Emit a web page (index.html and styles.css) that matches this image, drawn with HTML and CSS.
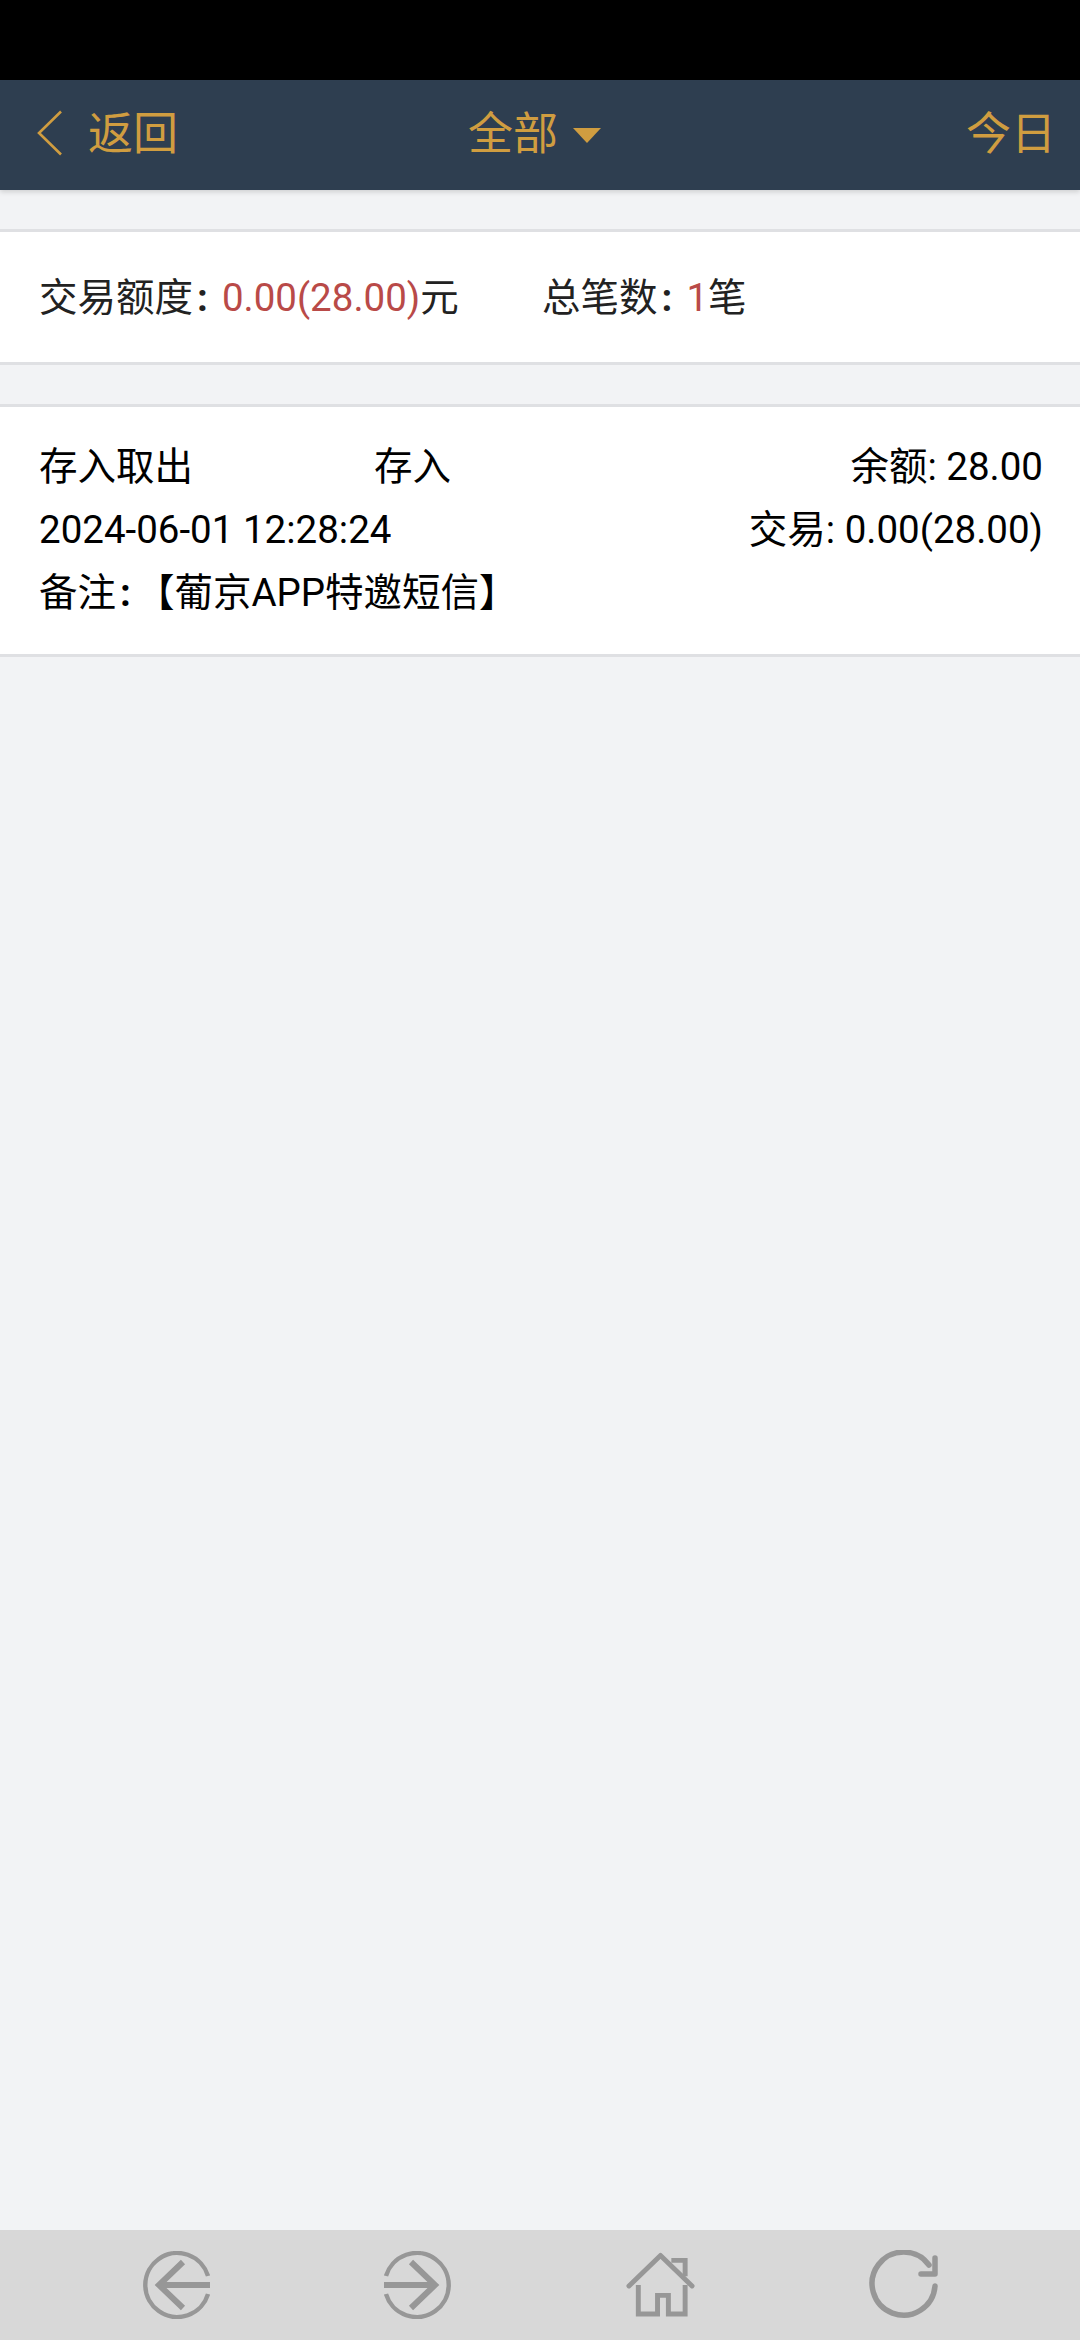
FILE: index.html
```html
<!DOCTYPE html>
<html lang="zh-CN">
<head>
    <meta charset="UTF-8">
    <title>交易记录</title>
    <link rel="stylesheet" href="styles.css">
</head>
<body>
    <div class="status-bar"></div>
    <header class="nav-bar">
        <div class="nav-back">
            <svg class="back-icon" width="28" height="46" viewBox="0 0 28 46">
                <path d="M25 1.5 L3 23 L25 44.5" fill="none" stroke="#d09d40" stroke-width="2.6"/>
            </svg>
            <span>返回</span>
        </div>
        <div class="nav-title">
            <span>全部</span>
            <svg class="caret" width="30" height="16" viewBox="0 0 30 16">
                <path d="M1 1 H29 L15 16 Z" fill="#d09d40"/>
            </svg>
        </div>
        <div class="nav-right">今日</div>
    </header>

    <main class="content">
        <section class="card summary">
            <div class="summary-amount">交易额度<span class="colon">:</span><span class="red">0.00(28.00)</span>元</div>
            <div>总笔数<span class="colon">:</span><span class="red">1</span>笔</div>
        </section>

        <section class="card record">
            <div class="record-row">
                <div class="record-left">
                    <span class="record-type">存入取出</span>
                    <span>存入</span>
                </div>
                <span>余额: 28.00</span>
            </div>
            <div class="record-row">
                <span>2024-06-01 12:28:24</span>
                <span>交易: 0.00(28.00)</span>
            </div>
            <div class="record-row">
                <span>备注<span class="colon colon-tight">:</span>【葡京APP特邀短信】</span>
            </div>
        </section>
    </main>

    <footer class="tool-bar">
        <svg width="68" height="68" viewBox="0 0 68 68" fill="none" stroke="#979797">
            <path d="M66 25 A32 32 0 1 0 66 43" stroke-width="4.4"/>
            <path d="M41 11 L17 34 L41 57" stroke-width="6"/>
            <path d="M17 34 H68" stroke-width="6"/>
        </svg>
        <svg width="68" height="68" viewBox="0 0 68 68" fill="none" stroke="#979797">
            <path d="M2 25 A32 32 0 1 1 2 43" stroke-width="4.4"/>
            <path d="M27 11 L51 34 L27 57" stroke-width="6"/>
            <path d="M0 34 H51" stroke-width="6"/>
        </svg>
        <svg width="69" height="66" viewBox="0 0 70 66" fill="none" stroke="#979797" stroke-width="5">
            <path d="M3 34 L35 3 L67 34" stroke-linecap="round" stroke-linejoin="round"/>
            <path d="M46 8 H60 V24"/>
            <path d="M12.500 33 V62.500 H32 V43.500 H43 V62.500 H60 V33"/>
        </svg>
        <svg width="70" height="70" viewBox="0 0 70 70" fill="none" stroke="#979797" stroke-width="5.500" stroke-linecap="round" stroke-linejoin="round">
            <path d="M66 36 A31.500 31.500 0 1 1 60 15"/>
            <path d="M66 8 V24 H52"/>
        </svg>
    </footer>
</body>
</html>
```

FILE: styles.css
```css
body {
    margin: 0;
    width: 1080px;
    height: 2340px;
    display: flex;
    flex-direction: column;
    background-color: #f2f3f5;
    font-family: Roboto, "Noto Sans CJK SC", sans-serif;
    font-size: 38.5px;
    color: #111;
}
.status-bar {
    height: 80px;
    background-color: #000;
}
.nav-bar {
    height: 110px;
    padding: 0 24px 0 36px;
    display: grid;
    grid-template-columns: 1fr auto 1fr;
    align-items: center;
    background-color: #2e3e50;
    color: #d09d40;
    font-size: 45px;
    line-height: 108px;
    box-shadow: 0 2px 5px rgba(0,0,0,0.15);
}
.nav-back {
    display: flex;
    align-items: center;
    gap: 24px;
}
.back-icon {
    margin-bottom: 5px;
}
.nav-title {
    display: flex;
    align-items: center;
    gap: 14px;
    margin-right: 22px;
}
.nav-right {
    text-align: right;
}
.content {
    flex: 1;
    padding-top: 39px;
}
.card {
    margin-bottom: 39px;
    background-color: #fff;
    border-top: 3px solid #dfe0e3;
    border-bottom: 3px solid #dfe0e3;
}
.summary {
    height: 136px;
    padding: 0 39px 7px;
    box-sizing: border-box;
    display: flex;
    align-items: center;
    color: #222;
}
.summary-amount {
    width: 503px;
}
.colon {
    margin: 0 14px 0 4px;
    font-weight: 700;
}
.colon-tight {
    margin-right: 5px;
}
.red {
    color: #b94a48;
}
.record {
    height: 219px;
    padding: 28px 37px 0 39px;
}
.record-row {
    height: 63px;
    line-height: 63px;
    display: flex;
    justify-content: space-between;
    color: #000;
}
.record-left {
    display: flex;
}
.record-type {
    width: 335px;
}
.tool-bar {
    height: 110px;
    padding-left: 142px;
    display: flex;
    gap: 174px;
    align-items: center;
    background-color: #d8d8d8;
}
```
